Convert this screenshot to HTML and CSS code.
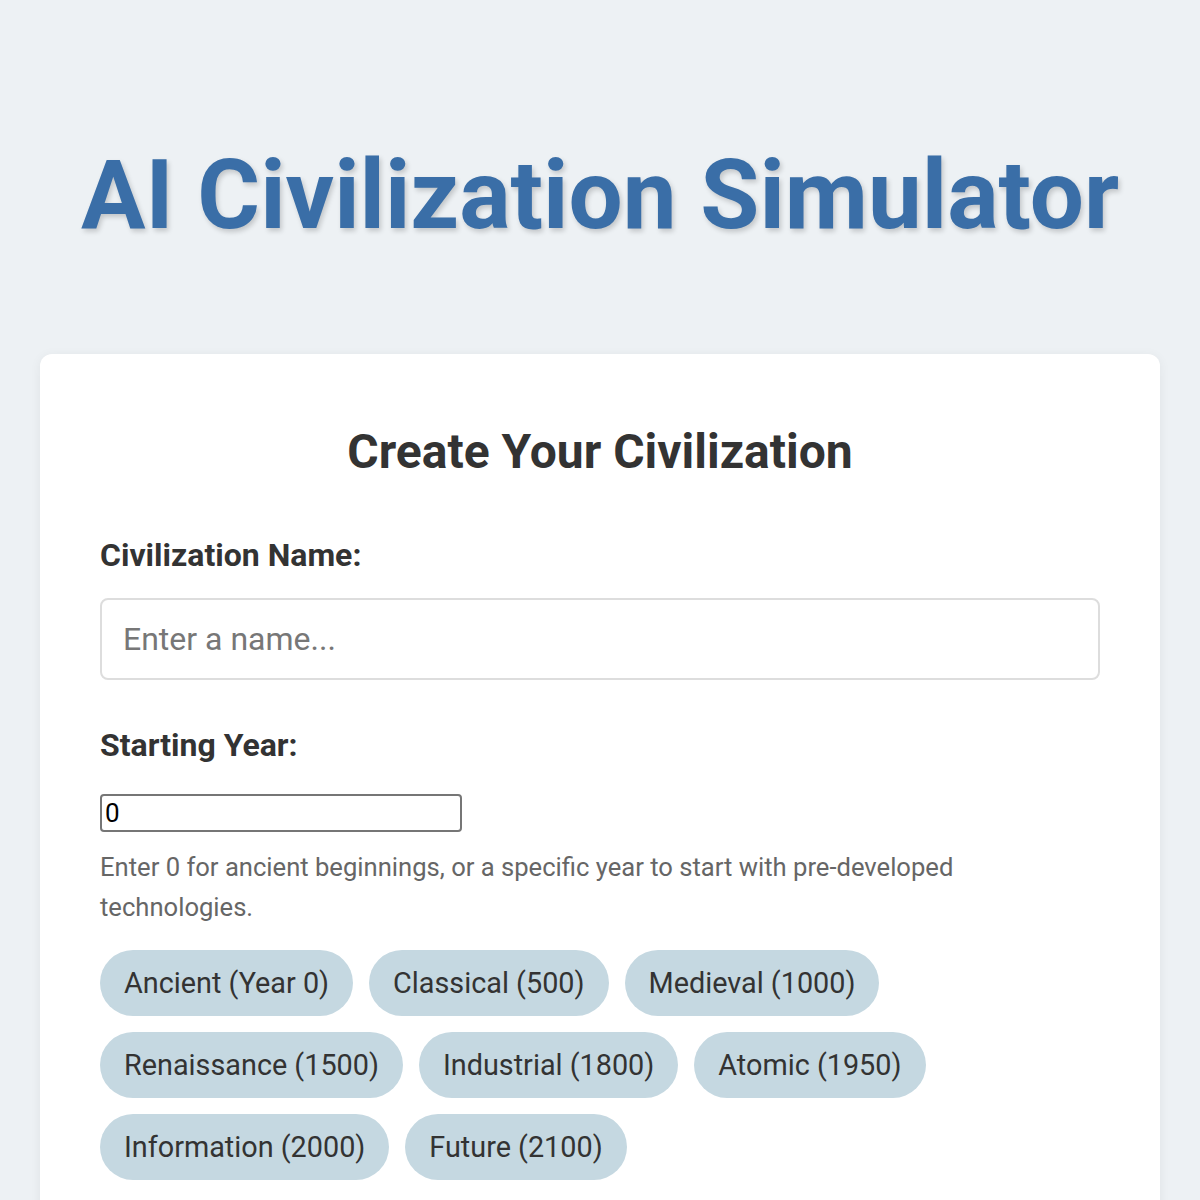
FILE: index.html
```html
<!DOCTYPE html>
<html lang="en">
<head>
  <meta charset="UTF-8">
  <meta name="viewport" content="width=device-width, initial-scale=1.0">
  <title>AI Civilization Simulator</title>
  <link rel="stylesheet" href="styles.css">
</head>
<body>
  <div class="page">
    <h1 class="title">AI Civilization Simulator</h1>

    <div class="card">
      <h2 class="card-title">Create Your Civilization</h2>

      <form id="civForm" class="civ-form">
        <label class="field-label" for="civName">Civilization Name:</label>
        <input class="name-input" type="text" id="civName" placeholder="Enter a name...">

        <label class="field-label" for="startYear">Starting Year:</label>
        <input class="year-input" type="text" id="startYear" value="0">
        <p class="hint">Enter 0 for ancient beginnings, or a specific year to start with pre-developed technologies.</p>

        <div class="eras">
          <button type="button" class="era">Ancient (Year 0)</button>
          <button type="button" class="era">Classical (500)</button>
          <button type="button" class="era">Medieval (1000)</button>
          <button type="button" class="era">Renaissance (1500)</button>
          <button type="button" class="era">Industrial (1800)</button>
          <button type="button" class="era">Atomic (1950)</button>
          <button type="button" class="era">Information (2000)</button>
          <button type="button" class="era">Future (2100)</button>
        </div>
      </form>
    </div>
  </div>
</body>
</html>
```

FILE: styles.css
```css
body {
  font-family: Roboto, "Noto Sans", Arial, sans-serif;
  background-color: #edf1f4;
  color: #333;
  margin: 0;
  padding: 0;
}
.page {
  padding: 0 40px;
}
.title {
  margin: 0;
  padding: 140px 0 104px;
  text-align: center;
  font-size: 96px;
  font-weight: 700;
  line-height: 110px;
  color: #3a6ea7;
  text-shadow: 2px 3px 5px rgba(0, 0, 0, 0.18);
}
.card {
  background-color: #fff;
  border-radius: 12px;
  box-shadow: 0 2px 12px rgba(0, 0, 0, 0.06);
  padding: 58px 60px 40px;
}
.card-title {
  margin: 0 0 43px;
  text-align: center;
  font-size: 48px;
  font-weight: 700;
  line-height: 80px;
  color: #333;
}
.civ-form {
  display: flex;
  flex-direction: column;
  align-items: flex-start;
}
.field-label {
  font-size: 32px;
  font-weight: 700;
  line-height: 40px;
  color: #333;
  margin-bottom: 23px;
}
.name-input {
  box-sizing: border-box;
  width: 100%;
  height: 82px;
  padding: 0 21px;
  border: 2px solid #ddd;
  border-radius: 8px;
  font-family: inherit;
  font-size: 32px;
  color: #333;
  margin-bottom: 45px;
}
.name-input::placeholder {
  color: #777;
}
.year-input {
  box-sizing: border-box;
  width: 362px;
  height: 38px;
  padding: 0 3px;
  border: 2px solid #767676;
  border-radius: 4px;
  font-family: inherit;
  font-size: 26px;
  color: #000;
  margin: 6px 0 0;
}
.hint {
  margin: 15px 0 23px;
  font-size: 25.6px;
  line-height: 40px;
  color: #666;
}
.eras {
  display: flex;
  flex-wrap: wrap;
  gap: 16px;
}
.era {
  height: 66px;
  padding: 0 24px;
  border: none;
  border-radius: 33px;
  background-color: #c5d8e1;
  font-family: inherit;
  font-size: 28.8px;
  color: #333;
  cursor: pointer;
}
.era:hover {
  background-color: #b5ccd8;
}
```
